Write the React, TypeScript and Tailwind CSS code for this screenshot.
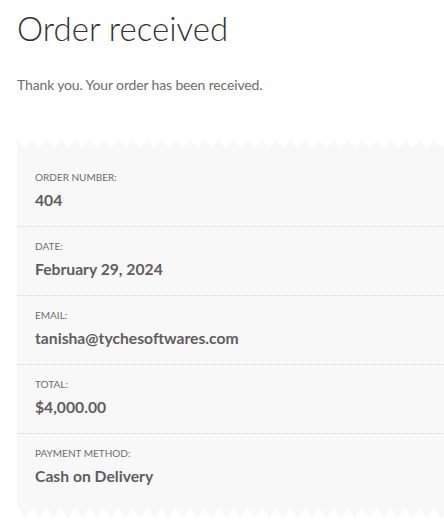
import React from 'react';

// Order overview rows
interface Detail {
    label: string;
    value: string;
}

const details: Detail[] = [
    { label: 'Order number:', value: '404' },
    { label: 'Date:', value: 'February 29, 2024' },
    { label: 'Email:', value: 'tanisha@tychesoftwares.com' },
    { label: 'Total:', value: '$4,000.00' },
    { label: 'Payment method:', value: 'Cash on Delivery' },
];

// Saw-tooth edge above and below the receipt box
const Zigzag: React.FC<{ side: 'top' | 'bottom' }> = ({ side }) => {
    const id = `zz-${side}`;
    const p = 14.35;
    const h = side === 'top' ? 8 : 10;
    const d =
        side === 'top'
            ? `M${-p / 2} ${h} L0 0 L${p / 2} ${h} Z M${p / 2} ${h} L${p} 0 L${p * 1.5} ${h} Z`
            : `M${-p / 2} 0 L0 ${h} L${p / 2} 0 Z M${p / 2} 0 L${p} ${h} L${p * 1.5} 0 Z`;
    return (
        <svg className="block w-full" height={h} aria-hidden="true">
            <defs>
                <pattern id={id} width={p} height={h} patternUnits="userSpaceOnUse" x={side === 'top' ? 1 : 8}>
                    <path d={d} fill="#f8f8f8" />
                </pattern>
            </defs>
            <rect width="100%" height={h} fill={`url(#${id})`} />
        </svg>
    );
};

const App: React.FC = () => {
    return (
        <div className="w-[444px] h-[531px] overflow-hidden bg-white pl-[17px] font-['Lato',sans-serif]">
            <h1 className="pt-[6px] text-[33px] leading-[44px] font-light text-[#333333]">Order received</h1>
            <p className="mt-[24px] text-[14px] leading-[22px] tracking-[-0.15px] text-[#6d6d6d]">
                Thank you. Your order has been received.
            </p>
            <div className="mt-[44px]">
                <Zigzag side="top" />
                <ul className="bg-[#f8f8f8] pt-[10px] pb-[6px]">
                    {details.map((d, i) => (
                        <li
                            key={i}
                            className={
                                i < details.length - 1
                                    ? 'pl-[18px] pt-[10px] pb-[14px] border-b border-dotted border-[#d8d8d8]'
                                    : 'pl-[18px] pt-[10px] pb-[14px]'
                            }
                        >
                            <div className="text-[10px] leading-[18px] uppercase text-[#6d6d6d]">{d.label}</div>
                            <strong className="block mt-[2px] text-[15.7px] leading-[24px] font-bold text-[#5e5e5e]">
                                {d.value}
                            </strong>
                        </li>
                    ))}
                </ul>
                <Zigzag side="bottom" />
            </div>
        </div>
    );
};

export default App;
